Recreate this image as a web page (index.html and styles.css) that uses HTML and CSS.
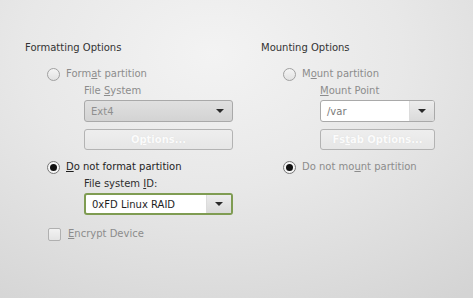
FILE: index.html
```html
<!DOCTYPE html>
<html>
<head>
<meta charset="utf-8">
<link rel="stylesheet" href="styles.css">
</head>
<body>
<div class="page">
  <div class="col">
    <div class="title">Formatting Options</div>
    <div class="radio-row first disabled"><span class="radio"></span><span>Form<u>a</u>t partition</span></div>
    <div class="indent">
      <div class="label disabled">File <u>S</u>ystem</div>
      <div class="combo combo-disabled wide"><span class="combo-text">Ext4</span><span class="arrow"></span></div>
      <div class="button wide">O<u>p</u>tions...</div>
    </div>
    <div class="radio-row second"><span class="radio checked"></span><span><u>D</u>o not format partition</span></div>
    <div class="indent">
      <div class="label">File system <u>I</u>D:</div>
      <div class="combo combo-active wide"><span class="combo-text">0xFD Linux RAID</span><span class="combo-btn"><span class="arrow"></span></span></div>
    </div>
    <div class="check-row disabled"><span class="check"></span><span><u>E</u>ncrypt Device</span></div>
  </div>
  <div class="col">
    <div class="title">Mounting Options</div>
    <div class="radio-row first disabled"><span class="radio"></span><span>M<u>o</u>unt partition</span></div>
    <div class="indent">
      <div class="label disabled"><u>M</u>ount Point</div>
      <div class="combo combo-entry narrow"><span class="combo-text">/var</span><span class="combo-btn"><span class="arrow"></span></span></div>
      <div class="button narrow">Fs<u>t</u>ab Options...</div>
    </div>
    <div class="radio-row second disabled"><span class="radio checked"></span><span>Do not mo<u>u</u>nt partition</span></div>
  </div>
</div>
</body>
</html>
```

FILE: styles.css
```css
html, body {
  margin: 0;
  padding: 0;
}
body {
  font-family: "DejaVu Sans", "Liberation Sans", sans-serif;
  font-size: 10px;
  color: #2e2e2e;
}
.page {
  width: 473px;
  height: 298px;
  box-sizing: border-box;
  padding: 41px 0 0 25px;
  display: grid;
  grid-template-columns: 236px 1fr;
  background: radial-gradient(ellipse 420px 300px at 45% 18%, #f3f3f3 0%, #e8e8e8 45%, #d4d4d4 100%);
  overflow: hidden;
}
.col {
  display: flex;
  flex-direction: column;
}
u {
  text-decoration: underline;
  text-underline-offset: 1px;
}
.title {
  height: 13px;
  line-height: 13px;
  color: #333;
}
.disabled {
  color: #8c8c8c;
}
.radio-row, .check-row {
  display: flex;
  align-items: center;
  height: 16px;
  line-height: 16px;
  color: #1e1e1e;
}
.radio-row.disabled, .check-row.disabled {
  color: #8c8c8c;
}
.radio-row.first {
  margin-top: 12px;
}
.radio-row.second {
  margin-top: 9px;
}
.radio {
  width: 11px;
  height: 11px;
  border: 1px solid #a0a0a0;
  border-radius: 50%;
  background: linear-gradient(#f4f4f4, #e2e2e2);
  margin-left: 22px;
  margin-right: 6px;
  position: relative;
  flex: none;
}
.radio.checked {
  border-color: #777;
  background: #f6f6f6;
}
.radio.checked::after {
  content: "";
  position: absolute;
  left: 2px;
  top: 2px;
  width: 7px;
  height: 7px;
  border-radius: 50%;
  background: #111;
}
.indent {
  display: flex;
  flex-direction: column;
  padding-left: 59px;
}
.label {
  height: 15px;
  line-height: 15px;
  margin-top: 1px;
  color: #2e2e2e;
}
.label.disabled {
  color: #8c8c8c;
}
.combo {
  box-sizing: border-box;
  height: 22px;
  margin-top: 2px;
  border: 1px solid #a9a9a9;
  border-radius: 3px;
  display: flex;
  align-items: center;
  position: relative;
  overflow: hidden;
}
.wide {
  width: 149px;
}
.narrow {
  width: 115px;
}
.combo-text {
  flex: 1;
  padding-left: 6px;
}
.combo-disabled {
  background: linear-gradient(#e0e0e0, #d3d3d3);
  color: #8f8f8f;
}
.combo-disabled .arrow {
  margin-right: 8px;
}
.combo-active {
  border: 2px solid #7f9c52;
  background: #fff;
  color: #1e1e1e;
}
.combo-active .combo-text {
  padding-left: 6px;
}
.combo-entry {
  background: #fff;
  color: #7a7a7a;
}
.combo-btn {
  align-self: stretch;
  width: 24px;
  display: flex;
  align-items: center;
  justify-content: center;
  background: linear-gradient(#ececec, #dadada);
  border-left: 1px solid #dcdcdc;
}
.arrow {
  width: 0;
  height: 0;
  border-left: 4px solid transparent;
  border-right: 4px solid transparent;
  border-top: 4px solid #2a2a2a;
}
.button {
  box-sizing: border-box;
  height: 21px;
  margin-top: 7px;
  border: 1px solid #b3b3b3;
  border-radius: 3px;
  background: linear-gradient(#eeeeee, #e6e6e6);
  color: #fbfbfb;
  font-weight: bold;
  text-align: center;
  line-height: 19px;
  text-shadow: 0 0 1px #d8d8d8;
}
.check-row {
  margin-top: 11px;
}
.check {
  box-sizing: border-box;
  width: 13px;
  height: 13px;
  border: 1px solid #b0b0b0;
  border-radius: 2px;
  background: linear-gradient(#f2f2f2, #e4e4e4);
  margin-left: 23px;
  margin-right: 7px;
  flex: none;
}
```
